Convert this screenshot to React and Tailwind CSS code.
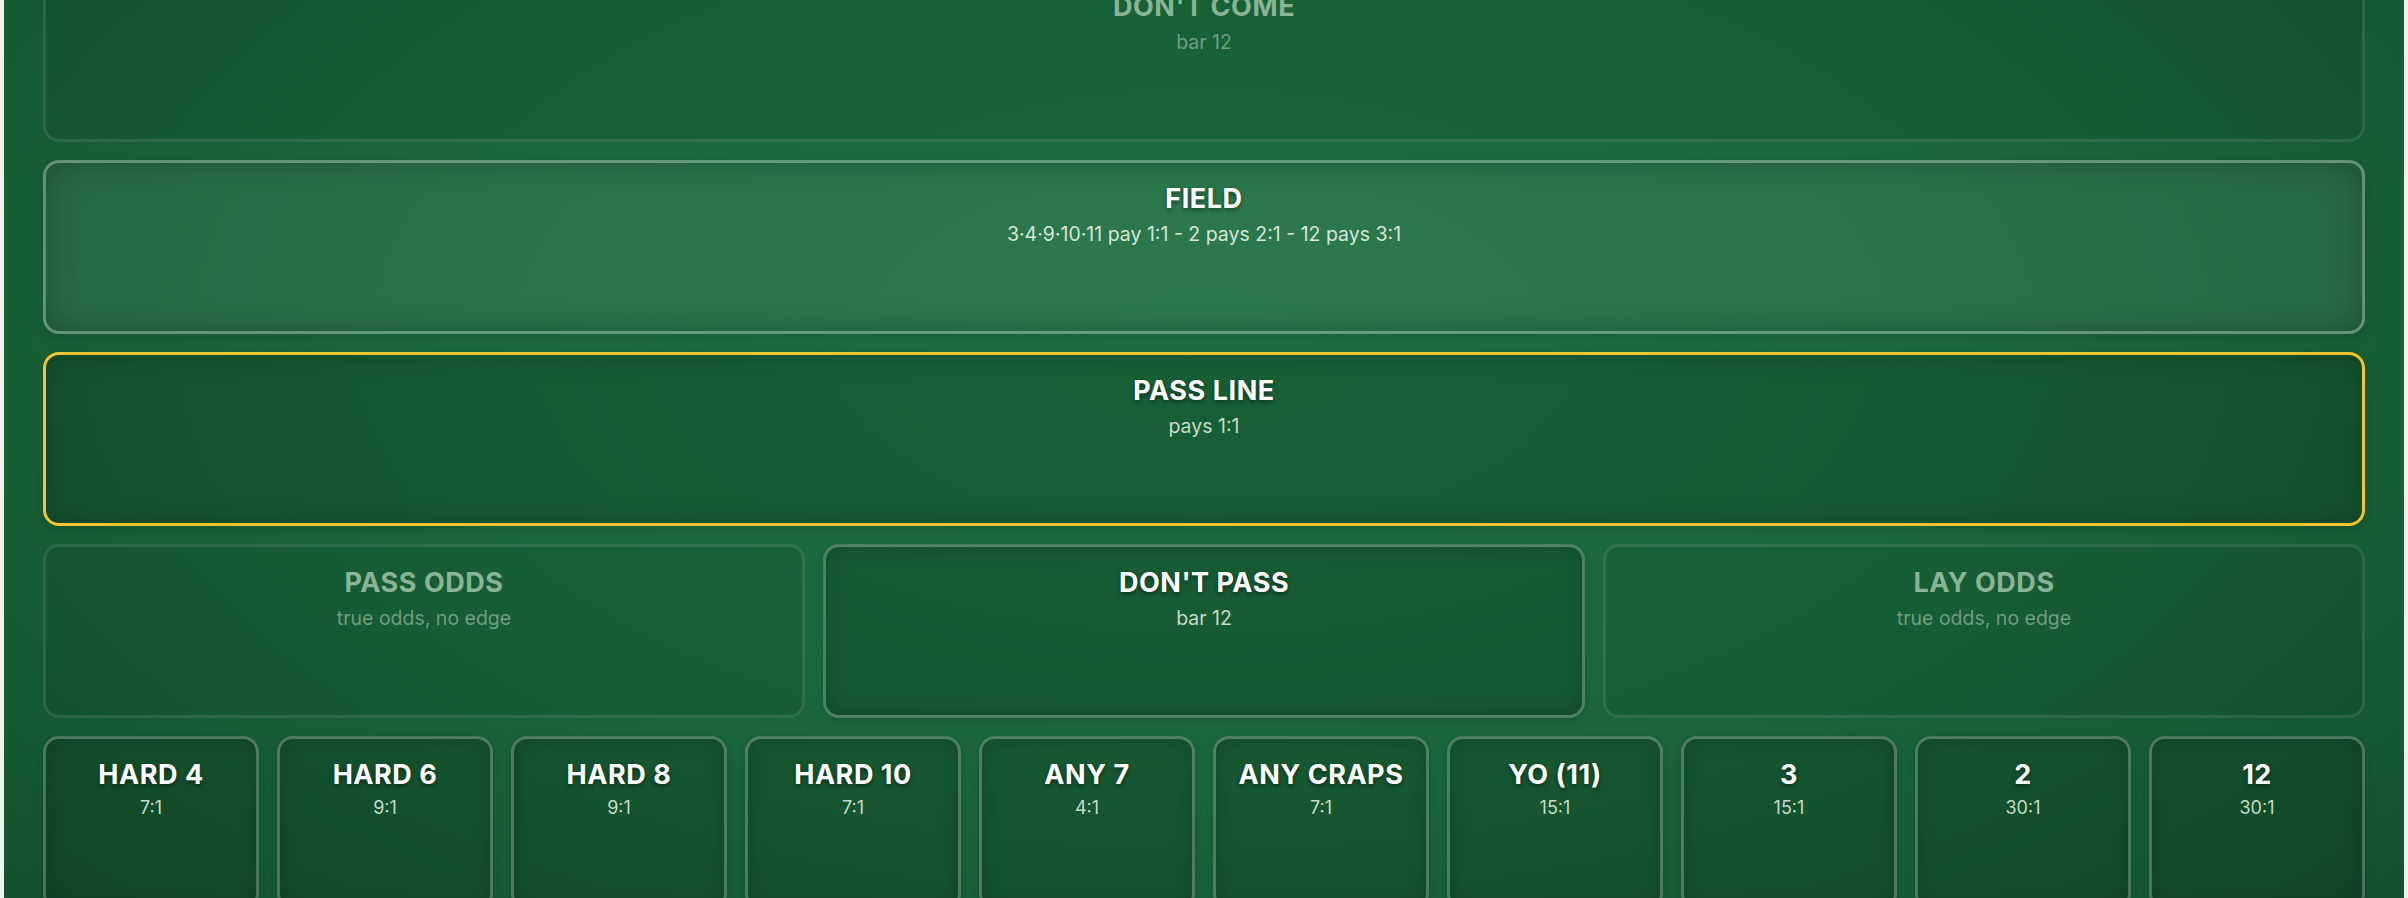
import React from "react";

const FONT = { fontFamily: "Inter, 'Noto Sans', 'Liberation Sans', sans-serif" };

// Visual variants of a betting area on the felt
const VARIANTS = {
  dim: {
    box: "border-white/[0.11] bg-black/[0.08]",
    title: "text-[#88b598]",
    sub: "text-[#6e9e80]",
    shadow: "",
  },
  normal: {
    box: "border-white/[0.24] bg-black/[0.14] shadow-[inset_0_0_22px_rgba(0,0,0,0.18),0_3px_8px_rgba(0,0,0,0.12)]",
    title: "text-white",
    sub: "text-[#c3dbcb]",
    shadow: "[text-shadow:0_2px_4px_rgba(0,0,0,0.45)]",
  },
  field: {
    box: "border-white/[0.28] bg-white/[0.07] shadow-[inset_0_0_30px_rgba(0,0,0,0.24),0_3px_8px_rgba(0,0,0,0.12)]",
    title: "text-white",
    sub: "text-[#d4e6da]",
    shadow: "[text-shadow:0_2px_4px_rgba(0,0,0,0.45)]",
  },
  active: {
    box: "border-[#f3c431] bg-black/[0.13] shadow-[inset_0_0_26px_rgba(0,0,0,0.2),0_3px_8px_rgba(0,0,0,0.15)]",
    title: "text-white",
    sub: "text-[#c3dbcb]",
    shadow: "[text-shadow:0_2px_4px_rgba(0,0,0,0.45)]",
  },
};

function BetArea({ title, sub, variant = "normal", small = false }) {
  const v = VARIANTS[variant];
  return (
    <div
      className={`flex h-[174px] flex-col items-center rounded-[16px] border-[3px] pt-[19px] ${v.box}`}
    >
      <div
        className={`text-[27px] font-bold leading-[33px] tracking-[0.02em] ${v.title} ${v.shadow}`}
      >
        {title}
      </div>
      <div
        className={`${small ? "mt-[5px] text-[18px] leading-[24px]" : "mt-[6px] text-[19.5px] leading-[26px]"} ${v.sub}`}
      >
        {sub}
      </div>
    </div>
  );
}

const PROPS = [
  ["HARD 4", "7:1"],
  ["HARD 6", "9:1"],
  ["HARD 8", "9:1"],
  ["HARD 10", "7:1"],
  ["ANY 7", "4:1"],
  ["ANY CRAPS", "7:1"],
  ["YO (11)", "15:1"],
  ["3", "15:1"],
  ["2", "30:1"],
  ["12", "30:1"],
];

export default function App() {
  return (
    <div className="min-h-screen overflow-hidden bg-[#eef2ef]" style={FONT}>
      <div className="mx-auto h-[960px] w-[2400px] overflow-hidden bg-[radial-gradient(ellipse_at_50%_35%,#1d6f40_0%,#1b683b_45%,#165a33_80%,#134e2c_100%)] px-[39px]">
        <div className="-mt-[32px] flex flex-col gap-[18px]">
          <BetArea title="DON'T COME" sub="bar 12" variant="dim" />
          <BetArea
            title="FIELD"
            sub="3·4·9·10·11 pay 1:1 - 2 pays 2:1 - 12 pays 3:1"
            variant="field"
          />
          <BetArea title="PASS LINE" sub="pays 1:1" variant="active" />
          <div className="grid grid-cols-3 gap-[18px]">
            <BetArea title="PASS ODDS" sub="true odds, no edge" variant="dim" />
            <BetArea title="DON'T PASS" sub="bar 12" variant="normal" />
            <BetArea title="LAY ODDS" sub="true odds, no edge" variant="dim" />
          </div>
          <div className="grid grid-cols-10 gap-[18px]">
            {PROPS.map(([t, s]) => (
              <BetArea key={t} title={t} sub={s} variant="normal" small />
            ))}
          </div>
        </div>
      </div>
    </div>
  );
}
